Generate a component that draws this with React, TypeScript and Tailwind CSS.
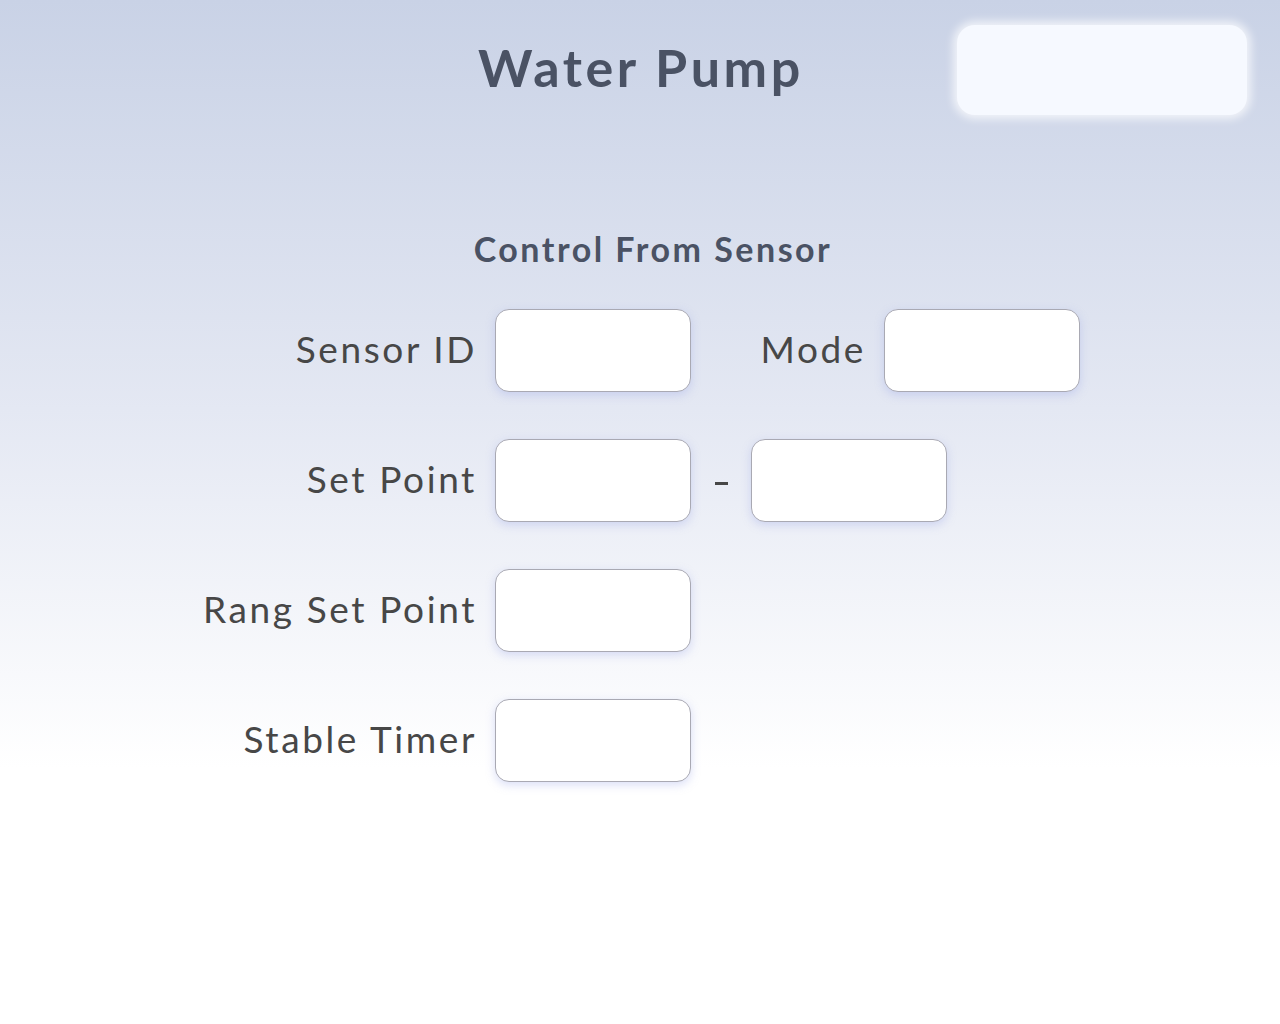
import React from 'react';

const font = { fontFamily: 'Lato, "Open Sans", sans-serif' };

function Field({ className = '' }: { className?: string }) {
  return (
    <div
      className={`w-[196px] h-[83px] rounded-[14px] bg-white border border-[#a9a9b3] shadow-[0_3px_10px_rgba(150,160,230,0.35)] ${className}`}
    />
  );
}

function Label({ children }: { children: React.ReactNode }) {
  return (
    <div className="w-[495px] pr-[18px] pb-[4px] text-right text-[37px] tracking-[2.6px] text-[#474747] leading-none whitespace-nowrap">
      {children}
    </div>
  );
}

export default function App() {
  return (
    <div
      className="w-[1280px] h-[1024px] bg-[linear-gradient(180deg,#c9d2e6_0%,#e4e8f3_40%,#ffffff_75%,#ffffff_100%)] flex flex-col"
      style={font}
    >
      {/* Header */}
      <div className="relative h-[140px]">
        <h1 className="absolute left-0 right-0 top-[41px] pl-[2px] text-center text-[52px] font-bold text-[#4a5264] leading-none tracking-[3.6px]">
          Water Pump
        </h1>
        <div className="absolute left-[957px] top-[25px] w-[290px] h-[90px] rounded-[18px] bg-[#f6f9ff] shadow-[0_0_8px_4px_rgba(255,255,255,0.7)]" />
      </div>

      <div className="mt-[92px] pl-[26px] text-center text-[34px] font-bold text-[#4a5264] leading-none tracking-[2.5px]">
        Control From Sensor
      </div>

      {/* Form rows */}
      <div className="mt-[43px] flex flex-col gap-[47px]">
        <div className="flex items-center">
          <Label>Sensor ID</Label>
          <Field />
          <div className="w-[193px] pr-[18px] pb-[4px] text-right text-[37px] tracking-[2.6px] text-[#474747] leading-none">
            Mode
          </div>
          <Field />
        </div>
        <div className="flex items-center">
          <Label>Set Point</Label>
          <Field />
          <div className="w-[60px] flex justify-center pt-[6px]">
            <div className="w-[13px] h-[3px] bg-[#474747]" />
          </div>
          <Field />
        </div>
        <div className="flex items-center">
          <Label>Rang Set Point</Label>
          <Field />
        </div>
        <div className="flex items-center">
          <Label>Stable Timer</Label>
          <Field />
        </div>
      </div>
    </div>
  );
}
